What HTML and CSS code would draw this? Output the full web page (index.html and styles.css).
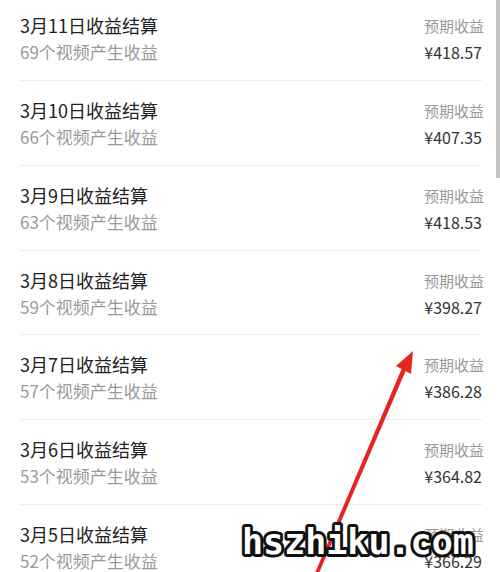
FILE: index.html
```html
<!DOCTYPE html>
<html lang="zh-CN">

<head>
    <meta charset="UTF-8">
    <meta name="viewport" content="width=device-width, initial-scale=1.0">
    <title>收益结算</title>
    <link rel="stylesheet" href="styles.css">
</head>

<body>
    <!-- Settlement list -->
    <main class="list">
        <div class="row">
            <div class="info">
                <div class="title">3月11日收益结算</div>
                <div class="sub">69个视频产生收益</div>
            </div>
            <div class="money">
                <div class="label">预期收益</div>
                <div class="amount">¥418.57</div>
            </div>
        </div>
        <div class="row">
            <div class="info">
                <div class="title">3月10日收益结算</div>
                <div class="sub">66个视频产生收益</div>
            </div>
            <div class="money">
                <div class="label">预期收益</div>
                <div class="amount">¥407.35</div>
            </div>
        </div>
        <div class="row">
            <div class="info">
                <div class="title">3月9日收益结算</div>
                <div class="sub">63个视频产生收益</div>
            </div>
            <div class="money">
                <div class="label">预期收益</div>
                <div class="amount">¥418.53</div>
            </div>
        </div>
        <div class="row">
            <div class="info">
                <div class="title">3月8日收益结算</div>
                <div class="sub">59个视频产生收益</div>
            </div>
            <div class="money">
                <div class="label">预期收益</div>
                <div class="amount">¥398.27</div>
            </div>
        </div>
        <div class="row">
            <div class="info">
                <div class="title">3月7日收益结算</div>
                <div class="sub">57个视频产生收益</div>
            </div>
            <div class="money">
                <div class="label">预期收益</div>
                <div class="amount">¥386.28</div>
            </div>
        </div>
        <div class="row">
            <div class="info">
                <div class="title">3月6日收益结算</div>
                <div class="sub">53个视频产生收益</div>
            </div>
            <div class="money">
                <div class="label">预期收益</div>
                <div class="amount">¥364.82</div>
            </div>
        </div>
        <div class="row">
            <div class="info">
                <div class="title">3月5日收益结算</div>
                <div class="sub">52个视频产生收益</div>
            </div>
            <div class="money">
                <div class="label">预期收益</div>
                <div class="amount">¥366.29</div>
            </div>
        </div>
    </main>

    <!-- Scrollbar thumb -->
    <div class="scroll-thumb"></div>

    <!-- Red annotation arrow -->
    <svg class="arrow" width="500" height="572" viewBox="0 0 500 572">
        <polygon points="315,573 319,573 406,370 402,368" fill="#e52620" />
        <polygon points="413,351 396,366 411,374" fill="#e52620" />
    </svg>

    <!-- Watermark -->
    <svg class="watermark" width="260" height="50" viewBox="0 0 260 50">
        <text x="4" y="39" class="wm-text">hszhiku.com</text>
    </svg>
</body>

</html>
```

FILE: styles.css
```css
* {
    box-sizing: border-box;
    margin: 0;
    padding: 0;
}

body {
    width: 500px;
    height: 572px;
    overflow: hidden;
    background: #fff;
    font-family: "Noto Sans CJK SC", "Noto Sans", sans-serif;
    position: relative;
}

/* List */

.list {
    margin-top: -3.8px;
    padding: 0 18px 0 20px;
}

.row {
    display: flex;
    justify-content: space-between;
    height: 84.8px;
    padding-top: 16px;
    border-bottom: 1px solid #ececec;
}

.title {
    font-size: 18px;
    line-height: 26px;
    color: #222;
}

.sub {
    font-size: 17px;
    line-height: 28px;
    color: #9a9a9a;
}

.money {
    display: flex;
    flex-direction: column;
    align-items: flex-end;
    margin-right: -2px;
}

.label {
    font-size: 15px;
    line-height: 27px;
    color: #999;
}

.amount {
    font-size: 16px;
    line-height: 27px;
    color: #333;
    margin-right: 2px;
}

/* Overlays */

.scroll-thumb {
    position: absolute;
    top: 0;
    right: 0;
    width: 4px;
    height: 178px;
    background: #c4c4c4;
}

.arrow {
    position: absolute;
    top: 0;
    left: 0;
}

.watermark {
    position: absolute;
    left: 238px;
    top: 515px;
}

.wm-text {
    font-family: "DejaVu Sans Mono", monospace;
    font-weight: bold;
    font-size: 35px;
    fill: #fff;
    stroke: #111;
    stroke-width: 6px;
    stroke-linejoin: round;
    paint-order: stroke;
}
```
